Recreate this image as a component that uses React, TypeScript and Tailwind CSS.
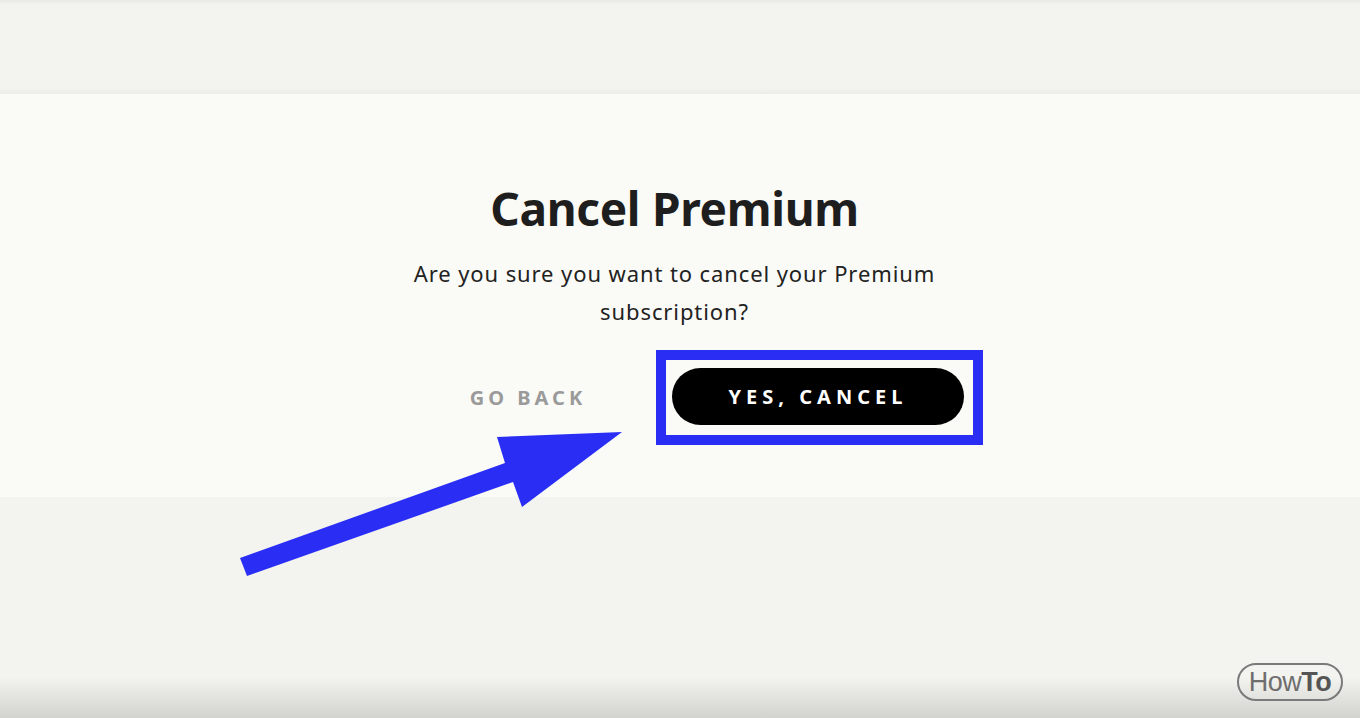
import React from "react";

export default function App() {
  return (
    <div className="relative w-[1360px] h-[718px] overflow-hidden flex flex-col bg-[#f3f3ef]" style={{ fontFamily: '"Noto Sans", "Liberation Sans", sans-serif' }}>
      <div className="h-[94px] shrink-0 bg-[linear-gradient(#e9e9e5_0px,#f3f3ef_5px,#f3f3ef_88px,#ecece8_94px)]" />
      <div className="h-[403px] shrink-0 bg-[#fafbf7] flex flex-col items-center pt-[86px] pr-[11px]">
        <h1 className="text-[46px] leading-[56px] font-bold text-[#1e1e1e] tracking-[-0.3px]">Cancel Premium</h1>
        <p className="mt-[18px] w-[560px] text-center text-[22px] leading-[38px] tracking-[0.9px] text-[#222]">
          Are you sure you want to cancel your Premium subscription?
        </p>
        <div className="mt-[20px] ml-[70px] flex items-center">
          <button className="w-[184px] text-[20px] leading-none font-bold tracking-[4px] text-[#9a9a9a]">GO BACK</button>
          <div className="ml-[36px] border-[10px] border-[#2a2ef5] pl-[6px] pr-[9px] pt-[8px] pb-[10px]">
            <button className="w-[292px] h-[57px] rounded-full bg-black text-white text-[20px] font-bold tracking-[5px]">YES, CANCEL</button>
          </div>
        </div>
      </div>
      <div className="flex-1 bg-[linear-gradient(#f3f3ef_0px,#f3f3ef_180px,#d2d2ce_221px)]" />
      <svg className="absolute left-0 top-0 pointer-events-none" width="1360" height="718" viewBox="0 0 1360 718">
        <polygon points="240,558 505,463 497,437 622,432 522,507 513,482 247,576" fill="#2a2ef5" />
      </svg>
      <div className="absolute left-[1237px] top-[663px] w-[106px] h-[38px] rounded-full border-[2px] border-[#7a7a7a] flex items-center justify-center">
        <span className="text-[27px] leading-none text-[#6e6e6e] tracking-[-0.5px]" style={{ fontFamily: '"Liberation Sans", sans-serif' }}>How<span className="font-bold text-[#555]">To</span></span>
      </div>
    </div>
  );
}
